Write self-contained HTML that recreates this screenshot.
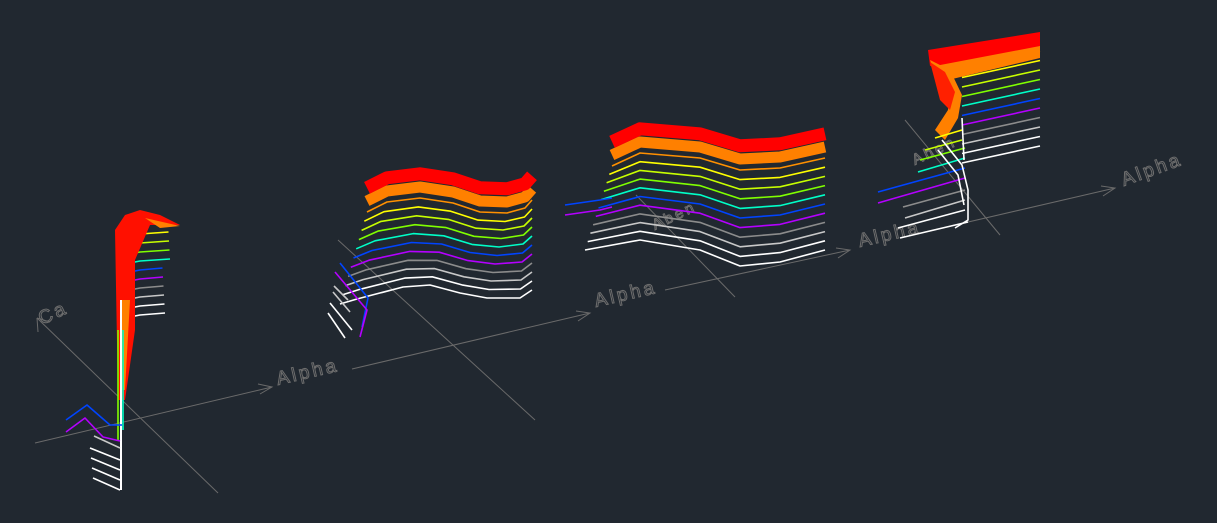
<!DOCTYPE html>
<html><head><meta charset="utf-8"><style>
html,body{margin:0;padding:0;background:#212830;width:1217px;height:523px;overflow:hidden}
svg{display:block}
text{font-family:"Liberation Sans",sans-serif;fill:none;stroke:#6e6e6e;stroke-width:1;font-size:19px;letter-spacing:3px}
</style></head><body>
<svg id="s" width="1217" height="523" viewBox="0 0 1217 523" xmlns="http://www.w3.org/2000/svg">
<rect width="1217" height="523" fill="#212830"/>
<g stroke="#6a6a6a" stroke-width="1" fill="none">
<polyline points="35,443 272,387"/><polyline points="258,384 272,387 260,394"/>
<polyline points="352,369 590,313"/><polyline points="576,311 590,313 578,321"/>
<polyline points="665,290 850,250"/><polyline points="836,248 850,250 838,258"/>
<polyline points="925,232 1115,188"/><polyline points="1101,186 1115,188 1103,196"/>
<polyline points="37,318 218,493"/><polyline points="37,318 38,332"/><polyline points="37,318 50,322"/>
<polyline points="338,240 535,420"/>
<polyline points="636,195 735,297"/>
<polyline points="905,120 1000,235"/>
</g>
<text transform="translate(278,385) rotate(-13)">Alpha</text>
<text transform="translate(596,307) rotate(-13)">Alpha</text>
<text transform="translate(860,247) rotate(-13)">Alpha</text>
<text transform="translate(1124,186) rotate(-20)">Alpha</text>
<text transform="translate(42,325) rotate(-25)">Ca</text>
<text transform="translate(655,230) rotate(-25)" style="font-size:15px">Aben</text>
<text transform="translate(915,165) rotate(-25)" style="font-size:15px">Aben</text>
<g id="g" fill="none" stroke-width="1.6" stroke-linejoin="round"></g>
</svg>
<script>
var g=document.getElementById('g');
var cols=['#ffffff','#ffffff','#c8c8c8','#8c8c8c','#b400ff','#0044ff','#00ffc8','#80ff00','#c8ff00','#ffff00','#ff9000'];
function pl(pts,c,w){var p=document.createElementNS('http://www.w3.org/2000/svg','polyline');p.setAttribute('points',pts.map(function(a){return a[0]+','+a[1]}).join(' '));p.setAttribute('stroke',c);if(w)p.setAttribute('stroke-width',w);g.appendChild(p);}
function lerp(a,b,t){return a.map(function(p,i){return[p[0]+(b[i][0]-p[0])*t,p[1]+(b[i][1]-p[1])*t]});}
function plot(bot,top,off){for(var i=0;i<cols.length;i++){pl(lerp(bot,top,i/(cols.length-1)),cols[i]);}
 var o=top.map(function(p){return[p[0],p[1]-off]});pl(o,'#ff8000',11);
 var r=top.map(function(p){return[p[0],p[1]-off*2.2]});pl(r,'#ff0000',13);}
// plot 3
plot([[585,250],[640,240],[700,250],[740,266],[780,262],[825,250]],[[612,166],[640,153],[700,158],[740,170],[780,168],[825,158]],11);
pl([[565,205],[600,200],[612,198]],'#0044ff');pl([[565,215],[600,210],[612,207]],'#b400ff');
// plot 2
plot([[340,304],[357,299],[403,287],[430,285],[460,293],[487,298],[520,298],[532,290]],[[367,212],[387,202],[420,198],[453,203],[480,212],[507,213],[525,208],[532,200]],11);
pl([[340,263],[368,298],[362,327]],'#0044ff');pl([[335,272],[367,310],[360,337]],'#b400ff');
[[328,313,345,338],[330,303,352,330],[333,292,350,312],[334,286,348,300]].forEach(function(a,k){pl([[a[0],a[1]],[a[2],a[3]]],k>1?'#c8c8c8':'#ffffff');});
// plot 1
for(var i=0;i<cols.length;i++){var y=315-i*9;pl([[125,y+3],[140,y],[165-i*0.5+(i>5?8:0),y-2]],cols[i]);}
g.insertAdjacentHTML('beforeend','<polygon points="115,230 125,215 140,210 160,215 180,225 150,225 135,260 135,330 125,400 118,400" fill="#ff1000"/><polygon points="120,300 130,300 125,390 122,390" fill="#ff8000"/><polygon points="145,218 180,226 160,228" fill="#ff8000"/>');
pl([[121,300],[121,490]],'#ffffff',2);pl([[118,330],[118,440]],'#80ff00');pl([[123,330],[123,430]],'#00ffc8');
pl([[66,420],[87,405],[110,425],[122,425]],'#0044ff');pl([[66,432],[85,418],[103,437],[120,441]],'#b400ff');
[460,470,480,490,448].forEach(function(y,k){pl([[90+k,y-12],[120,y]],k>3?'#c8c8c8':'#ffffff');});
// plot 4
for(var i=0;i<cols.length;i++){var yr=146-i*9.5;pl([[962,yr+17],[1040,yr]],cols[i]);}
g.insertAdjacentHTML('beforeend','<polygon points="928,50 1040,32 1040,48 945,68 930,66" fill="#ff0000"/><polygon points="935,66 1040,46 1040,58 948,80" fill="#ff8000"/><polygon points="930,60 950,70 962,95 958,118 945,140 935,130 948,110 950,90 935,75" fill="#ff8000"/><polygon points="930,62 945,72 955,92 950,110 940,100" fill="#ff2000"/>');
var low=[['#ffffff',900,238,968,222],['#ffffff',898,228,965,210],['#c8c8c8',905,218,965,200],['#8c8c8c',903,207,965,190],['#b400ff',878,203,965,178],['#0044ff',878,192,965,168],['#00ffc8',918,172,965,158],['#80ff00',920,160,965,148],['#c8ff00',925,150,962,140],['#ffff00',935,138,962,130]];
low.forEach(function(a){pl([[a[1],a[2]],[a[3],a[4]]],a[0]);});
pl([[942,140],[962,165],[968,190],[968,220],[955,228]],'#ffffff');pl([[938,150],[958,175],[964,205]],'#ffffff');pl([[962,118],[964,160]],'#ffffff');
</script>
</body></html>
